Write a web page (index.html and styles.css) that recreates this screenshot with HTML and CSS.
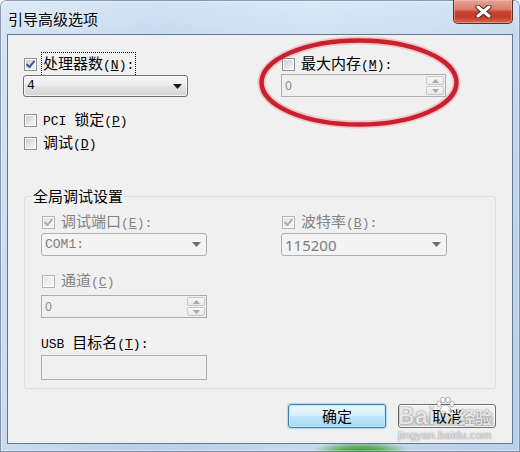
FILE: index.html
```html
<!DOCTYPE html>
<html lang="zh-CN">
<head>
<meta charset="utf-8">
<title>引导高级选项</title>
<link rel="stylesheet" href="styles.css">
</head>
<body>
<div class="window">
  <header class="titlebar">
    <span class="title">引导高级选项</span>
    <span class="close">
      <svg width="17" height="13" viewBox="0 0 17 13">
        <path class="x-out" d="M3 2 L14 11 M14 2 L3 11"/>
        <path class="x-in" d="M3 2 L14 11 M14 2 L3 11"/>
      </svg>
    </span>
  </header>
  <main class="client">
    <div class="top">
      <div class="col">
        <div class="check">
          <span class="box"><svg viewBox="0 0 9 9" width="9" height="9"><path class="tick" d="M1 4.5 L3.5 7.2 L8 1.4"/></svg></span>
          <span class="text focus">处理器数<span class="lat">(<u>N</u>):</span></span>
        </div>
        <div class="combo">
          <span class="val lat">4</span>
          <svg class="arrow" width="9" height="5" viewBox="0 0 9 5"><polygon points="0,0 9,0 4.5,5"/></svg>
        </div>
        <div class="check mt13">
          <span class="box"></span>
          <span class="text"><span class="lat">PCI </span>锁定<span class="lat">(<u>P</u>)</span></span>
        </div>
        <div class="check mt3">
          <span class="box"></span>
          <span class="text">调试<span class="lat">(<u>D</u>)</span></span>
        </div>
      </div>
      <div class="col">
        <div class="check">
          <span class="box"></span>
          <span class="text">最大内存<span class="lat">(<u>M</u>):</span></span>
        </div>
        <div class="spin">
          <span class="spinval">0</span>
          <span class="spinbtns">
            <span class="sb"><svg width="7" height="4" viewBox="0 0 7 4"><polygon points="0,4 7,4 3.5,0"/></svg></span>
            <span class="sb"><svg width="7" height="4" viewBox="0 0 7 4"><polygon points="0,0 7,0 3.5,4"/></svg></span>
          </span>
        </div>
      </div>
    </div>

    <fieldset class="group">
      <legend>全局调试设置</legend>
      <div class="gcols">
        <div class="gcol left">
          <div class="check dis">
            <span class="box"><svg viewBox="0 0 9 9" width="9" height="9"><path class="tick" d="M1 4.5 L3.5 7.2 L8 1.4"/></svg></span>
            <span class="text">调试端口<span class="lat">(<u>E</u>):</span></span>
          </div>
          <div class="combo dis">
            <span class="val lat">COM1:</span>
            <svg class="arrow" width="9" height="5" viewBox="0 0 9 5"><polygon points="0,0 9,0 4.5,5"/></svg>
          </div>
          <div class="check dis mt15">
            <span class="box"></span>
            <span class="text">通道<span class="lat">(<u>C</u>)</span></span>
          </div>
          <div class="spin wide mt4">
            <span class="spinval">0</span>
            <span class="spinbtns">
              <span class="sb"><svg width="7" height="4" viewBox="0 0 7 4"><polygon points="0,4 7,4 3.5,0"/></svg></span>
              <span class="sb"><svg width="7" height="4" viewBox="0 0 7 4"><polygon points="0,0 7,0 3.5,4"/></svg></span>
            </span>
          </div>
          <div class="label mt14"><span class="lat">USB </span>目标名<span class="lat">(<u>T</u>):</span></div>
          <div class="textbox mt3"></div>
        </div>
        <div class="gcol">
          <div class="check dis">
            <span class="box"><svg viewBox="0 0 9 9" width="9" height="9"><path class="tick" d="M1 4.5 L3.5 7.2 L8 1.4"/></svg></span>
            <span class="text">波特率<span class="lat">(<u>B</u>):</span></span>
          </div>
          <div class="combo dis">
            <span class="val sans">115200</span>
            <svg class="arrow" width="9" height="5" viewBox="0 0 9 5"><polygon points="0,0 9,0 4.5,5"/></svg>
          </div>
        </div>
      </div>
    </fieldset>

    <div class="buttons">
      <span class="btn default">确定</span>
      <span class="btn">取消</span>
    </div>
  </main>

  <svg class="annotation" width="520" height="452" viewBox="0 0 520 452" aria-hidden="true">
    <ellipse class="glow" cx="359" cy="82.5" rx="97.5" ry="42"/>
    <ellipse class="ring" cx="359" cy="82.5" rx="97.5" ry="42"/>
  </svg>

  <div class="watermark" aria-hidden="true">
    <div class="wm-row">
      <span class="wm-bai">Bai</span>
      <svg class="paw" width="20" height="18" viewBox="0 0 20 18">
        <ellipse cx="4" cy="7" rx="2.2" ry="2.8"/>
        <ellipse cx="8" cy="3" rx="2.2" ry="2.8"/>
        <ellipse cx="13" cy="3" rx="2.2" ry="2.8"/>
        <ellipse cx="17" cy="7" rx="2.2" ry="2.8"/>
        <path d="M10.5 8 C7 8 5 12 5 14.5 C5 17 8 17 10.5 16 C13 17 16 17 16 14.5 C16 12 14 8 10.5 8 Z"/>
      </svg>
      <span class="wm-jy">经验</span>
    </div>
    <div class="wm-url">jingyan.baidu.com</div>
  </div>
</div>
</body>
</html>
```

FILE: styles.css
```css
* { box-sizing: border-box; }
html, body { margin: 0; padding: 0; }
body {
  width: 520px;
  height: 452px;
  overflow: hidden;
  background: #fff;
  font-family: "Noto Sans CJK SC", sans-serif;
  font-size: 15px;
  color: #000;
}

.window {
  position: relative;
  width: 520px;
  height: 452px;
  padding: 0 7px;
  display: flex;
  flex-direction: column;
  border-radius: 6px 6px 0 0;
  background:
    radial-gradient(ellipse 50px 11px at 361px 452px, #2f8f3a 0%, #5fae5c 45%, rgba(170, 205, 230, 0) 100%),
    linear-gradient(90deg, rgba(255,255,255,0.25) 0%, rgba(255,255,255,0) 30%, rgba(255,255,255,0.2) 60%, rgba(255,255,255,0) 100%),
    linear-gradient(180deg, #d2e3f4 0%, #c6daef 8%, #bdd4ec 50%, #b9d0ea 100%);
  box-shadow: inset 0 0 0 1px rgba(60, 80, 110, 0.55), inset 0 0 0 2px rgba(255, 255, 255, 0.35);
}

/* title bar */
.titlebar {
  height: 34px;
  flex: none;
  display: flex;
  justify-content: space-between;
  align-items: flex-start;
}
.title {
  margin: 9px 0 0 1px;
  line-height: 20px;
  font-size: 15px;
  text-shadow: 0 0 6px rgba(255, 255, 255, 0.9);
}
.close {
  width: 60px;
  height: 24px;
  border: 1px solid #5c2d27;
  border-top: none;
  border-radius: 0 0 5px 5px;
  background: linear-gradient(180deg, #e6a394 0%, #db7e6c 40%, #c8432f 52%, #c23d2b 75%, #d96a4f 100%);
  box-shadow: inset 0 0 0 1px rgba(255, 200, 190, 0.45);
  display: flex;
  align-items: center;
  justify-content: center;
}
.close .x-out { stroke: #4a2722; stroke-width: 5; stroke-linecap: round; fill: none; }
.close .x-in { stroke: #fff; stroke-width: 3; stroke-linecap: round; fill: none; }

/* client area */
.client {
  height: 410px;
  flex: none;
  border: 1px solid #63778f;
  background: #f0f0f0;
  padding: 19px 15px 0 15px;
}

.top {
  display: grid;
  grid-template-columns: 258px 165px;
}
.col {
  display: flex;
  flex-direction: column;
  align-items: flex-start;
}

.mt3 { margin-top: 3px; }
.mt4 { margin-top: 4px; }
.mt13 { margin-top: 13px; }
.mt14 { margin-top: 14px; }
.mt15 { margin-top: 15px; }

.lat {
  font-family: "Liberation Mono", monospace;
  font-size: 13px;
}
.sans {
  font-family: "Noto Sans", sans-serif;
  font-size: 15px;
}

/* checkbox */
.check {
  display: flex;
  align-items: center;
  height: 20px;
  gap: 6px;
  padding-left: 1px;
  line-height: 20px;
  white-space: nowrap;
}
.box {
  flex: none;
  width: 13px;
  height: 13px;
  border: 1px solid #8e8f8f;
  padding: 1px;
  background: linear-gradient(135deg, #cbcdd1 0%, #e4e5e7 55%, #f7f7f7 100%) content-box, #fdfdfd;
  display: flex;
}
.box svg { display: block; }
.tick { fill: none; stroke: #3a579a; stroke-width: 1.9; stroke-linecap: round; stroke-linejoin: round; }
.focus {
  outline: 1px dotted #000;
  padding: 0 1px;
  margin-left: -1px;
}

.dis { color: #838383; }
.dis .box {
  border-color: #b4b4b4;
  background: linear-gradient(135deg, #e2e3e5 0%, #eeeeee 55%, #f8f8f8 100%) content-box, #fafafa;
}
.dis .tick { stroke: #acacac; }

/* combo */
.combo {
  margin-top: 1px;
  width: 165px;
  height: 22px;
  border: 1px solid #707070;
  border-radius: 3px;
  background: linear-gradient(180deg, #f5f5f5 0%, #ededed 45%, #e2e2e2 55%, #d6d6d6 100%);
  box-shadow: inset 0 0 0 1px rgba(255, 255, 255, 0.7);
  display: flex;
  align-items: center;
  justify-content: space-between;
  padding: 0 5px 0 3px;
  line-height: 20px;
}
.combo .arrow { fill: #1a1a1a; flex: none; }
.combo.dis {
  width: 166px;
  height: 23px;
  border-color: #adb2b5;
  background: #f4f4f4;
  box-shadow: none;
  color: #7d7d7d;
}
.combo.dis .arrow { fill: #6f6f6f; }

/* spin box */
.spin {
  width: 165px;
  height: 23px;
  border: 1px solid #adadad;
  background: #f0f0f0;
  display: flex;
  align-items: center;
}
.spin.wide { width: 166px; }
.spinval {
  padding-left: 3px;
  font-family: "Noto Sans", sans-serif;
  font-size: 12px;
  color: #8a8a8a;
}
.spinbtns {
  margin: 1px 1px 1px auto;
  width: 18px;
  height: 19px;
  display: flex;
  flex-direction: column;
  gap: 1px;
}
.sb {
  flex: 1;
  border: 1px solid #c9c9c9;
  border-radius: 2px;
  background: linear-gradient(180deg, #f8f8f8, #e8e8e8);
  display: flex;
  align-items: center;
  justify-content: center;
}
.sb svg { fill: #a8a8a8; display: block; }

.label {
  height: 20px;
  line-height: 20px;
  white-space: nowrap;
}
.textbox {
  width: 166px;
  height: 25px;
  border: 1px solid #adadad;
  background: #f0f0f0;
}

/* group box */
.group {
  margin: 34px 0 0 1px;
  width: 472px;
  min-width: 0;
  padding: 7px 0 8px 16px;
  border: 1px solid #d5dfe5;
  border-radius: 3px;
}
.group legend {
  margin-left: -9px;
  padding: 0 1px;
  line-height: 18px;
  font-size: 15px;
}
.gcols { display: flex; }
.gcol {
  display: flex;
  flex-direction: column;
  align-items: flex-start;
}
.gcol.left { width: 240px; }

/* buttons */
.buttons {
  display: flex;
  justify-content: flex-end;
  gap: 12px;
  margin: 15px 1px 0 0;
}
.btn {
  width: 98px;
  height: 24px;
  border: 1px solid #707070;
  border-radius: 3px;
  background: linear-gradient(180deg, #f2f2f2 0%, #ebebeb 49%, #dddddd 50%, #cfcfcf 100%);
  box-shadow: inset 0 0 0 1px rgba(255, 255, 255, 0.8);
  display: flex;
  align-items: center;
  justify-content: center;
  font-size: 15px;
  line-height: 20px;
}
.btn.default {
  border-color: #3c7fb1;
  background: linear-gradient(180deg, #eaf6fd 0%, #d9f0fc 49%, #bee6fd 50%, #a7d9f5 100%);
  box-shadow: inset 0 0 0 1px #c8e8fb, 0 0 1px 1px rgba(120, 190, 240, 0.5);
}

/* annotation overlay */
.annotation {
  position: absolute;
  left: 0;
  top: 0;
  pointer-events: none;
}
.annotation .glow { fill: none; stroke: rgba(240, 120, 130, 0.35); stroke-width: 8; }
.annotation .ring { fill: none; stroke: #c8202e; stroke-width: 4.5; }

/* watermark overlay */
.watermark {
  position: absolute;
  left: 398px;
  top: 396px;
  width: 100px;
  pointer-events: none;
  color: rgba(255, 255, 255, 0.85);
  text-shadow: 0 0 1px rgba(0, 0, 0, 0.5), 0 0 2px rgba(0, 0, 0, 0.25);
}
.wm-row {
  display: flex;
  align-items: flex-end;
  height: 33px;
}
.wm-bai {
  font-family: "Liberation Sans", sans-serif;
  font-weight: bold;
  font-size: 23px;
  line-height: 26px;
  letter-spacing: 0.5px;
}
.paw {
  align-self: flex-start;
  margin: 1px 0 0 0;
  fill: rgba(255, 255, 255, 0.8);
  stroke: rgba(0, 0, 0, 0.35);
  stroke-width: 0.8;
}
.wm-jy {
  margin-left: 3px;
  font-size: 17px;
  line-height: 24px;
  font-weight: bold;
}
.wm-url {
  font-family: "Liberation Sans", sans-serif;
  font-size: 11px;
  line-height: 11px;
  margin-top: 1px;
  letter-spacing: 0.3px;
}
```
